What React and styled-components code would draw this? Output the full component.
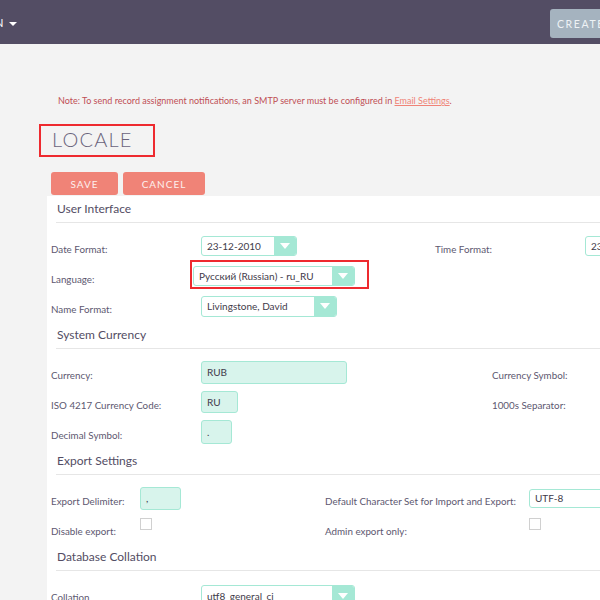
import React from 'react';
import styled, { createGlobalStyle } from 'styled-components';

const GlobalStyle = createGlobalStyle`
    html, body {
        margin: 0;
        padding: 0;
        background: #f3f3f3;
        font-family: Lato, "Open Sans", sans-serif;
        overflow: hidden;
    }
    #root {
        width: 600px;
        height: 600px;
        overflow: hidden;
    }
`;

const TopBar = styled.div`
    display: flex;
    justify-content: space-between;
    align-items: flex-start;
    height: 44px;
    background: #534d64;
    overflow: hidden;
`;

const NavItem = styled.div`
    display: flex;
    align-items: center;
    gap: 5px;
    margin-left: -5px;
    margin-top: 16px;
    color: #fff;
    font-size: 11px;
    letter-spacing: 1px;
`;

const Caret = styled.span`
    width: 0;
    height: 0;
    margin-top: 2px;
    border-left: 4px solid transparent;
    border-right: 4px solid transparent;
    border-top: 4px solid #fff;
`;

const CreateButton = styled.div`
    margin-top: 9px;
    margin-right: -24px;
    width: 74px;
    height: 29px;
    box-sizing: border-box;
    padding-left: 7px;
    display: flex;
    align-items: center;
    background: #a5b3bf;
    border-radius: 3px;
    color: #eef2f5;
    font-size: 10.5px;
    letter-spacing: 1.6px;
`;

const Note = styled.div`
    margin: 52px 0 0 58px;
    font-size: 9px;
    line-height: 10px;
    color: #bf4f55;
    white-space: nowrap;

    a {
        color: #f08377;
        text-decoration: underline;
    }
`;

const Title = styled.h1`
    margin: 18px 0 0 39px;
    width: 116px;
    box-sizing: border-box;
    border: 2px solid #ee2a2f;
    padding: 1px 0 4px 11px;
    font-size: 20px;
    line-height: 24px;
    font-weight: 300;
    letter-spacing: 1.2px;
    color: #6a647c;
`;

const ButtonRow = styled.div`
    display: flex;
    gap: 5px;
    margin: 15px 0 0 51px;
`;

const Button = styled.div`
    width: ${p => p.w}px;
    height: 23px;
    display: flex;
    align-items: center;
    justify-content: center;
    background: #f08377;
    border-radius: 3px;
    color: #fdf0ee;
    font-size: 10px;
    letter-spacing: 1px;
`;

const Panel = styled.div`
    margin: 1px 0 0 47px;
    padding: 2px 0 20px 4px;
    background: #fff;
    width: 600px;
`;

const SectionHeader = styled.div`
    margin: 0 0 11px 5px;
    padding: 4px 0 6px 1px;
    border-bottom: 1px solid #e6e6e6;
    font-size: 12px;
    line-height: 14px;
    color: #534d64;
`;

const Section = styled.div`
    display: grid;
    grid-template-columns: ${p => p.cols};
    grid-auto-rows: 30px;
`;

const Label = styled.div`
    padding-top: 9px;
    font-size: 9.8px;
    line-height: 12px;
    color: #5d5870;
    white-space: nowrap;
`;

const Cell = styled.div`
    white-space: nowrap;
`;

const Select = styled.div`
    display: inline-flex;
    width: ${p => p.w}px;
    height: ${p => p.h || 20}px;
    margin-top: ${p => p.top || 0}px;
    box-sizing: border-box;
    border: 1px solid #a5e8d5;
    border-radius: 3px;
    background: #fff;
    overflow: hidden;
`;

const SelectText = styled.span`
    flex: 1;
    padding-left: 5px;
    display: flex;
    align-items: center;
    font-size: 10px;
    color: #3f3b4a;
`;

const SelectArrow = styled.span`
    width: 22px;
    background: #a5e8d5;
    display: flex;
    align-items: center;
    justify-content: center;

    &::after {
        content: '';
        border-left: 5px solid transparent;
        border-right: 5px solid transparent;
        border-top: 6px solid #fff;
    }
`;

const Input = styled.div`
    display: inline-flex;
    align-items: center;
    width: ${p => p.w}px;
    height: ${p => p.h}px;
    box-sizing: border-box;
    padding-left: 5px;
    border: 1px solid #a5e8d5;
    border-radius: 3px;
    background: ${p => (p.plain ? '#fff' : '#d8f4ec')};
    font-size: 10px;
    color: #3f3b4a;
    margin-top: ${p => p.top || 0}px;
`;

const Checkbox = styled.div`
    width: 12px;
    height: 12px;
    margin-top: 2px;
    box-sizing: border-box;
    border: 1px solid #d0d0d0;
    background: #fff;
`;

const Highlight = styled.div`
    display: inline-block;
    margin: -4px 0 0 -11px;
    padding: 2px 12px 1px 1px;
    border: 2px solid #ee2a2f;
`;

const Dropdown = ({ w, h, top, value }) => (
    <Select w={w} h={h} top={top}>
        <SelectText>{value}</SelectText>
        <SelectArrow />
    </Select>
);

export default function App() {
    return (
        <>
            <GlobalStyle />
            <TopBar>
                <NavItem>N <Caret /></NavItem>
                <CreateButton>CREATE</CreateButton>
            </TopBar>
            <Note>
                Note: To send record assignment notifications, an SMTP server must be configured in <a>Email Settings</a>.
            </Note>
            <Title>LOCALE</Title>
            <ButtonRow>
                <Button w={67}>SAVE</Button>
                <Button w={82}>CANCEL</Button>
            </ButtonRow>
            <Panel>
                <SectionHeader>User Interface</SectionHeader>
                <Section cols="150px 234px 150px 1fr">
                    <Label>Date Format:</Label>
                    <Cell><Dropdown w={96} value="23-12-2010" /></Cell>
                    <Label>Time Format:</Label>
                    <Cell><Dropdown w={96} value="23:00" /></Cell>
                    <Label>Language:</Label>
                    <Cell>
                        <Highlight><Dropdown w={162} value="Русский (Russian) - ru_RU" /></Highlight>
                    </Cell>
                    <Label />
                    <Cell />
                    <Label>Name Format:</Label>
                    <Cell><Dropdown w={136} h={21} value="Livingstone, David" /></Cell>
                </Section>

                <SectionHeader>System Currency</SectionHeader>
                <Section cols="150px 291px 150px 1fr">
                    <Label>Currency:</Label>
                    <Cell><Input w={146} h={23}>RUB</Input></Cell>
                    <Label>Currency Symbol:</Label>
                    <Cell />
                    <Label>ISO 4217 Currency Code:</Label>
                    <Cell><Input w={37} h={22}>RU</Input></Cell>
                    <Label>1000s Separator:</Label>
                    <Cell />
                    <Label>Decimal Symbol:</Label>
                    <Cell><Input w={31} h={24}>.</Input></Cell>
                </Section>

                <SectionHeader>Export Settings</SectionHeader>
                <Section cols="89px 185px 204px 1fr">
                    <Label>Export Delimiter:</Label>
                    <Cell><Input w={41} h={23}>,</Input></Cell>
                    <Label>Default Character Set for Import and Export:</Label>
                    <Cell><Input plain w={90} h={19} top={1}>UTF-8</Input></Cell>
                    <Label>Disable export:</Label>
                    <Cell><Checkbox /></Cell>
                    <Label>Admin export only:</Label>
                    <Cell><Checkbox /></Cell>
                </Section>

                <SectionHeader>Database Collation</SectionHeader>
                <Section cols="150px 1fr">
                    <Label>Collation</Label>
                    <Cell><Dropdown w={154} h={22} top={3} value="utf8_general_ci" /></Cell>
                </Section>
            </Panel>
        </>
    );
}
